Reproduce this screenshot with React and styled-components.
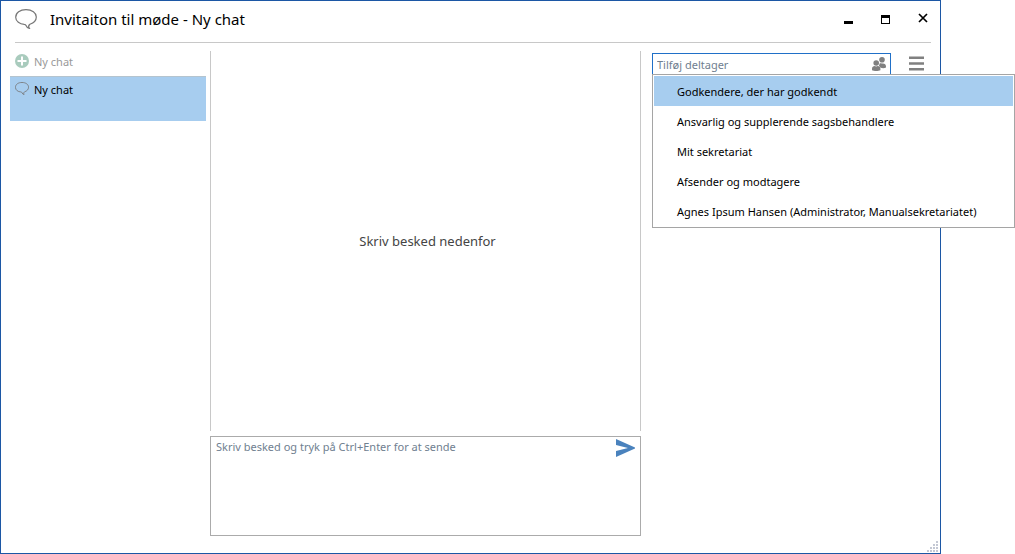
import { useState } from "react";
import styled, { createGlobalStyle } from "styled-components";

const GlobalStyle = createGlobalStyle`
    * {
        box-sizing: border-box;
    }
    body {
        margin: 0;
        background: #fff;
        color: #000;
        font-family: "Noto Sans", "Open Sans", sans-serif;
        font-size: 11px;
        line-height: 16px;
    }
    button, input, textarea {
        font: inherit;
        color: inherit;
    }
`;

const Page = styled.div`
    min-height: 100vh;
    padding-right: 74px;
    display: flex;
`;
const Window = styled.main`
    flex: 1;
    min-width: 0;
    position: relative;
    display: flex;
    flex-direction: column;
    border: 1px solid #1c57a5;
    background: #fff;
`;

const Header = styled.header`
    height: 42px;
    margin: 0 9px 0 14px;
    display: flex;
    align-items: center;
    border-bottom: 1px solid #c8c8c8;
    padding-bottom: 6px;
`;
const Title = styled.h1`
    flex: 1;
    margin: 0 0 0 13px;
    font-size: 15px;
    line-height: 20px;
    font-weight: 400;
`;
const WindowButtons = styled.div`
    display: flex;
    gap: 21px;
`;
const IconButton = styled.button`
    display: flex;
    align-items: center;
    justify-content: center;
    width: 16px;
    height: 16px;
    padding: 0;
    border: 0;
    background: none;
`;

const Body = styled.div`
    flex: 1;
    display: flex;
    padding: 8px 15px 17px 9px;
`;

const Sidebar = styled.nav`
    width: 196px;
    margin-right: 4px;
`;
const SidebarButton = styled.button`
    display: flex;
    align-items: flex-start;
    gap: 5px;
    width: 100%;
    height: ${(props) => (props.$selected ? "45px" : "25px")};
    padding: ${(props) => (props.$selected ? "5px" : "3px 5px")};
    border: 0;
    border-top: ${(props) => (props.$selected ? "1px solid #b4c4cf" : "0")};
    background: ${(props) => (props.$selected ? "#a7cdef" : "none")};
    color: ${(props) => (props.$selected ? "#000" : "#999")};
    text-align: left;
`;

const Conversation = styled.section`
    flex: 1;
    min-width: 0;
    display: flex;
    flex-direction: column;
    gap: 5px;
`;
const Messages = styled.div`
    flex: 1;
    display: flex;
    align-items: center;
    justify-content: center;
    border-left: 1px solid #c8c8c8;
    border-right: 1px solid #c8c8c8;
    padding-left: 4px;
    color: #444;
    font-size: 13px;
`;
const Composer = styled.form`
    height: 100px;
    display: flex;
    align-items: flex-start;
    padding: 2px 4px 2px 5px;
    border: 1px solid #ababab;
`;
const MessageInput = styled.textarea`
    flex: 1;
    height: 100%;
    padding: 0;
    border: 0;
    outline: 0;
    resize: none;
    background: none;
    &::placeholder {
        color: #708090;
    }
`;
const SendButton = styled(IconButton)`
    width: 20px;
    height: 18px;
`;

const Participants = styled.aside`
    width: 273px;
    margin-left: 11px;
    padding-top: 2px;
    display: flex;
    align-items: flex-start;
    gap: 18px;
`;
const SearchBox = styled.div`
    flex: 1;
    position: relative;
    display: flex;
    align-items: center;
    height: 22px;
    padding: 0 4px;
    border: 1px solid #2070c8;
`;
const SearchInput = styled.input`
    flex: 1;
    min-width: 0;
    height: 18px;
    padding: 1px 0 0;
    border: 0;
    outline: 0;
    background: none;
    &::placeholder {
        color: #708090;
    }
`;
const Menu = styled.ul`
    position: absolute;
    top: 100%;
    left: -1px;
    z-index: 1;
    width: 363px;
    margin: 0;
    padding: 1px;
    list-style: none;
    border: 1px solid #a5a5a5;
    background: #fff;
`;
const MenuItem = styled.button`
    display: block;
    width: 100%;
    height: 30px;
    padding: 1px 23px 0;
    border: 0;
    background: ${(props) => (props.$active ? "#a7cdef" : "none")};
    text-align: left;
    white-space: nowrap;
`;
const MenuButton = styled(IconButton)`
    height: 20px;
`;
const Grip = styled.svg`
    position: absolute;
    right: 1px;
    bottom: 0;
`;

const options = [
    "Godkendere, der har godkendt",
    "Ansvarlig og supplerende sagsbehandlere",
    "Mit sekretariat",
    "Afsender og modtagere",
    "Agnes Ipsum Hansen (Administrator, Manualsekretariatet)",
];

const Bubble = ({ width, height, color, stroke }) => (
    <svg width={width} height={height} viewBox="0 0 22 20" preserveAspectRatio="none" fill="none" stroke={color} strokeWidth={stroke}>
        <path d="M11 .7C5 .7 .7 3.8 .7 8.2C.7 12.4 4.8 15.2 9.2 15.3C10.3 15.3 10.8 15.8 11.2 16.8C11.7 18.3 12.9 19.2 14.3 19.3C13.4 18 13.6 16.2 14.9 15.2C18.9 13.9 21.3 11.4 21.3 8C21.3 3.9 17 .7 11 .7Z" />
    </svg>
);

const PlusIcon = () => (
    <svg width="14" height="14" viewBox="0 0 14 14">
        <circle cx="7" cy="7" r="7" fill="#a9cbbd" />
        <path d="M7 2.5v9M2.5 7h9" stroke="#fff" strokeWidth="2" />
    </svg>
);

const PeopleIcon = () => (
    <svg width="14" height="14" viewBox="0 0 14 14" fill="#808080">
        <circle cx="10" cy="2.8" r="2.8" />
        <path d="M7.3 6.6C8 6 8.8 6.5 10 6.5C12.4 6.1 14 7.3 14 9.4V10.6C12.6 11.3 10.4 11.3 8.6 10.8L7 8.7Z" />
        <circle cx="4.2" cy="6" r="3.3" fill="#fff" />
        <circle cx="4.2" cy="6" r="2.8" />
        <path d="M0 13.2V11.8C0 10 1.2 9.2 2.6 9.1L4.2 9.6L5.8 9.1C7.4 9.2 8.4 10 8.4 11.8V13.2C6.4 14.2 2 14.2 0 13.2Z" />
    </svg>
);

const App = () => {
    const [active, setActive] = useState(0);

    return (
        <Page>
            <GlobalStyle />
            <Window>
                <Header>
                    <Bubble width={22} height={20} color="#777" stroke={1.2} />
                    <Title>Invitaiton til møde - Ny chat</Title>
                    <WindowButtons>
                        <IconButton aria-label="Minimer">
                            <svg width="16" height="16">
                                <path d="M3 10h9v3H3z" />
                            </svg>
                        </IconButton>
                        <IconButton aria-label="Maksimer">
                            <svg width="16" height="16">
                                <path d="M3 4h9v9H3zM4 7v5h7V7z" fillRule="evenodd" />
                            </svg>
                        </IconButton>
                        <IconButton aria-label="Luk">
                            <svg width="16" height="16" stroke="#000" strokeWidth="1.7">
                                <path d="M4 3L12 11M12 3L4 11" />
                            </svg>
                        </IconButton>
                    </WindowButtons>
                </Header>
                <Body>
                    <Sidebar>
                        <SidebarButton>
                            <PlusIcon />
                            Ny chat
                        </SidebarButton>
                        <SidebarButton $selected>
                            <Bubble width={14} height={13} color="#777" stroke={1.3} />
                            Ny chat
                        </SidebarButton>
                    </Sidebar>
                    <Conversation>
                        <Messages>Skriv besked nedenfor</Messages>
                        <Composer onSubmit={(e) => e.preventDefault()}>
                            <MessageInput aria-label="Besked" placeholder="Skriv besked og tryk på Ctrl+Enter for at sende" />
                            <SendButton aria-label="Send">
                                <svg width="20" height="18" fill="#4a82bd">
                                    <path d="M0 0L19 8.6V9.4L0 18V12L12 9L0 6Z" />
                                </svg>
                            </SendButton>
                        </Composer>
                    </Conversation>
                    <Participants>
                        <SearchBox>
                            <SearchInput aria-label="Tilføj deltager" placeholder="Tilføj deltager" />
                            <PeopleIcon />
                            <Menu>
                                {options.map((option, i) => (
                                    <li key={option}>
                                        <MenuItem $active={i === active} onClick={() => setActive(i)}>
                                            {option}
                                        </MenuItem>
                                    </li>
                                ))}
                            </Menu>
                        </SearchBox>
                        <MenuButton aria-label="Menu">
                            <svg width="16" height="15" fill="#808080">
                                <path d="M0 .6h15v2.4H0zM0 6.3h15v2.4H0zM0 12h15v2.4H0z" />
                            </svg>
                        </MenuButton>
                    </Participants>
                </Body>
                <Grip width="12" height="12" fill="#c4c8d4">
                    <path d="M9 0h2v2H9zM6 3h2v2H6zM9 3h2v2H9zM3 6h2v2H3zM6 6h2v2H6zM9 6h2v2H9zM0 9h2v2H0zM3 9h2v2H3zM6 9h2v2H6zM9 9h2v2H9z" />
                </Grip>
            </Window>
        </Page>
    );
};

export default App;
